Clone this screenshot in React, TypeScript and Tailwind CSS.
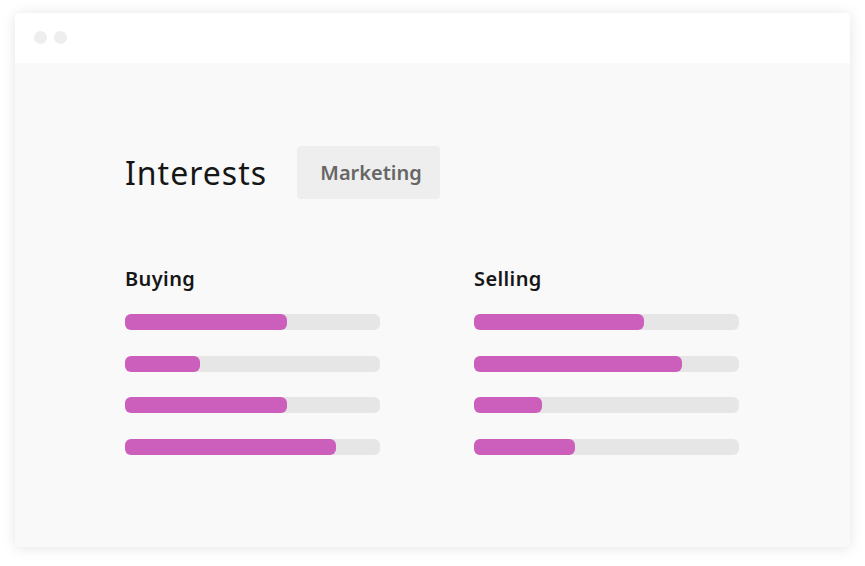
const buying = [162, 75, 162, 211];
const selling = [170, 208, 68, 101];

function Bars({ title, values, width }: { title: string; values: number[]; width: number }) {
  return (
    <div className="flex flex-col" style={{ width }}>
      <h3 className="text-[20px] leading-[24px] font-semibold tracking-[0.4px] text-[#161616]">{title}</h3>
      <div className="mt-[23px] flex flex-col gap-[25.5px]">
        {values.map((v, i) => (
          <div key={i} className="h-4 w-full rounded-[6px] bg-[#e6e6e6]">
            <div className="h-4 rounded-[6px] bg-[#cc5fbb]" style={{ width: v }} />
          </div>
        ))}
      </div>
    </div>
  );
}

export default function App() {
  return (
    <div
      className="min-h-screen bg-white pl-[15px] pt-[13px]"
      style={{ fontFamily: '"Noto Sans", "Open Sans", sans-serif' }}
    >
      <div className="flex h-[534px] w-[835px] flex-col overflow-hidden rounded-[4px] bg-[#f9f9f9] shadow-[0_1px_14px_rgba(0,0,0,0.11)]">
        <div className="flex h-[50px] items-center gap-[7px] bg-white pb-[1px] pl-[19px]">
          <span className="h-[13px] w-[13px] rounded-full bg-[#eeeeee]" />
          <span className="h-[13px] w-[13px] rounded-full bg-[#eeeeee]" />
        </div>
        <div className="flex flex-col px-[110px] pt-[83px]">
          <div className="flex items-center gap-[30px]">
            <h1 className="text-[32px] leading-[40px] font-normal tracking-[1px] text-[#161616]">Interests</h1>
            <div className="flex h-[53px] w-[143px] items-center justify-center rounded-[4px] bg-[#eeeeee] pl-[5px] text-[20px] font-semibold text-[#666666]">
              Marketing
            </div>
          </div>
          <div className="mt-[68px] flex gap-[94px]">
            <Bars title="Buying" values={buying} width={255} />
            <Bars title="Selling" values={selling} width={265} />
          </div>
        </div>
      </div>
    </div>
  );
}
